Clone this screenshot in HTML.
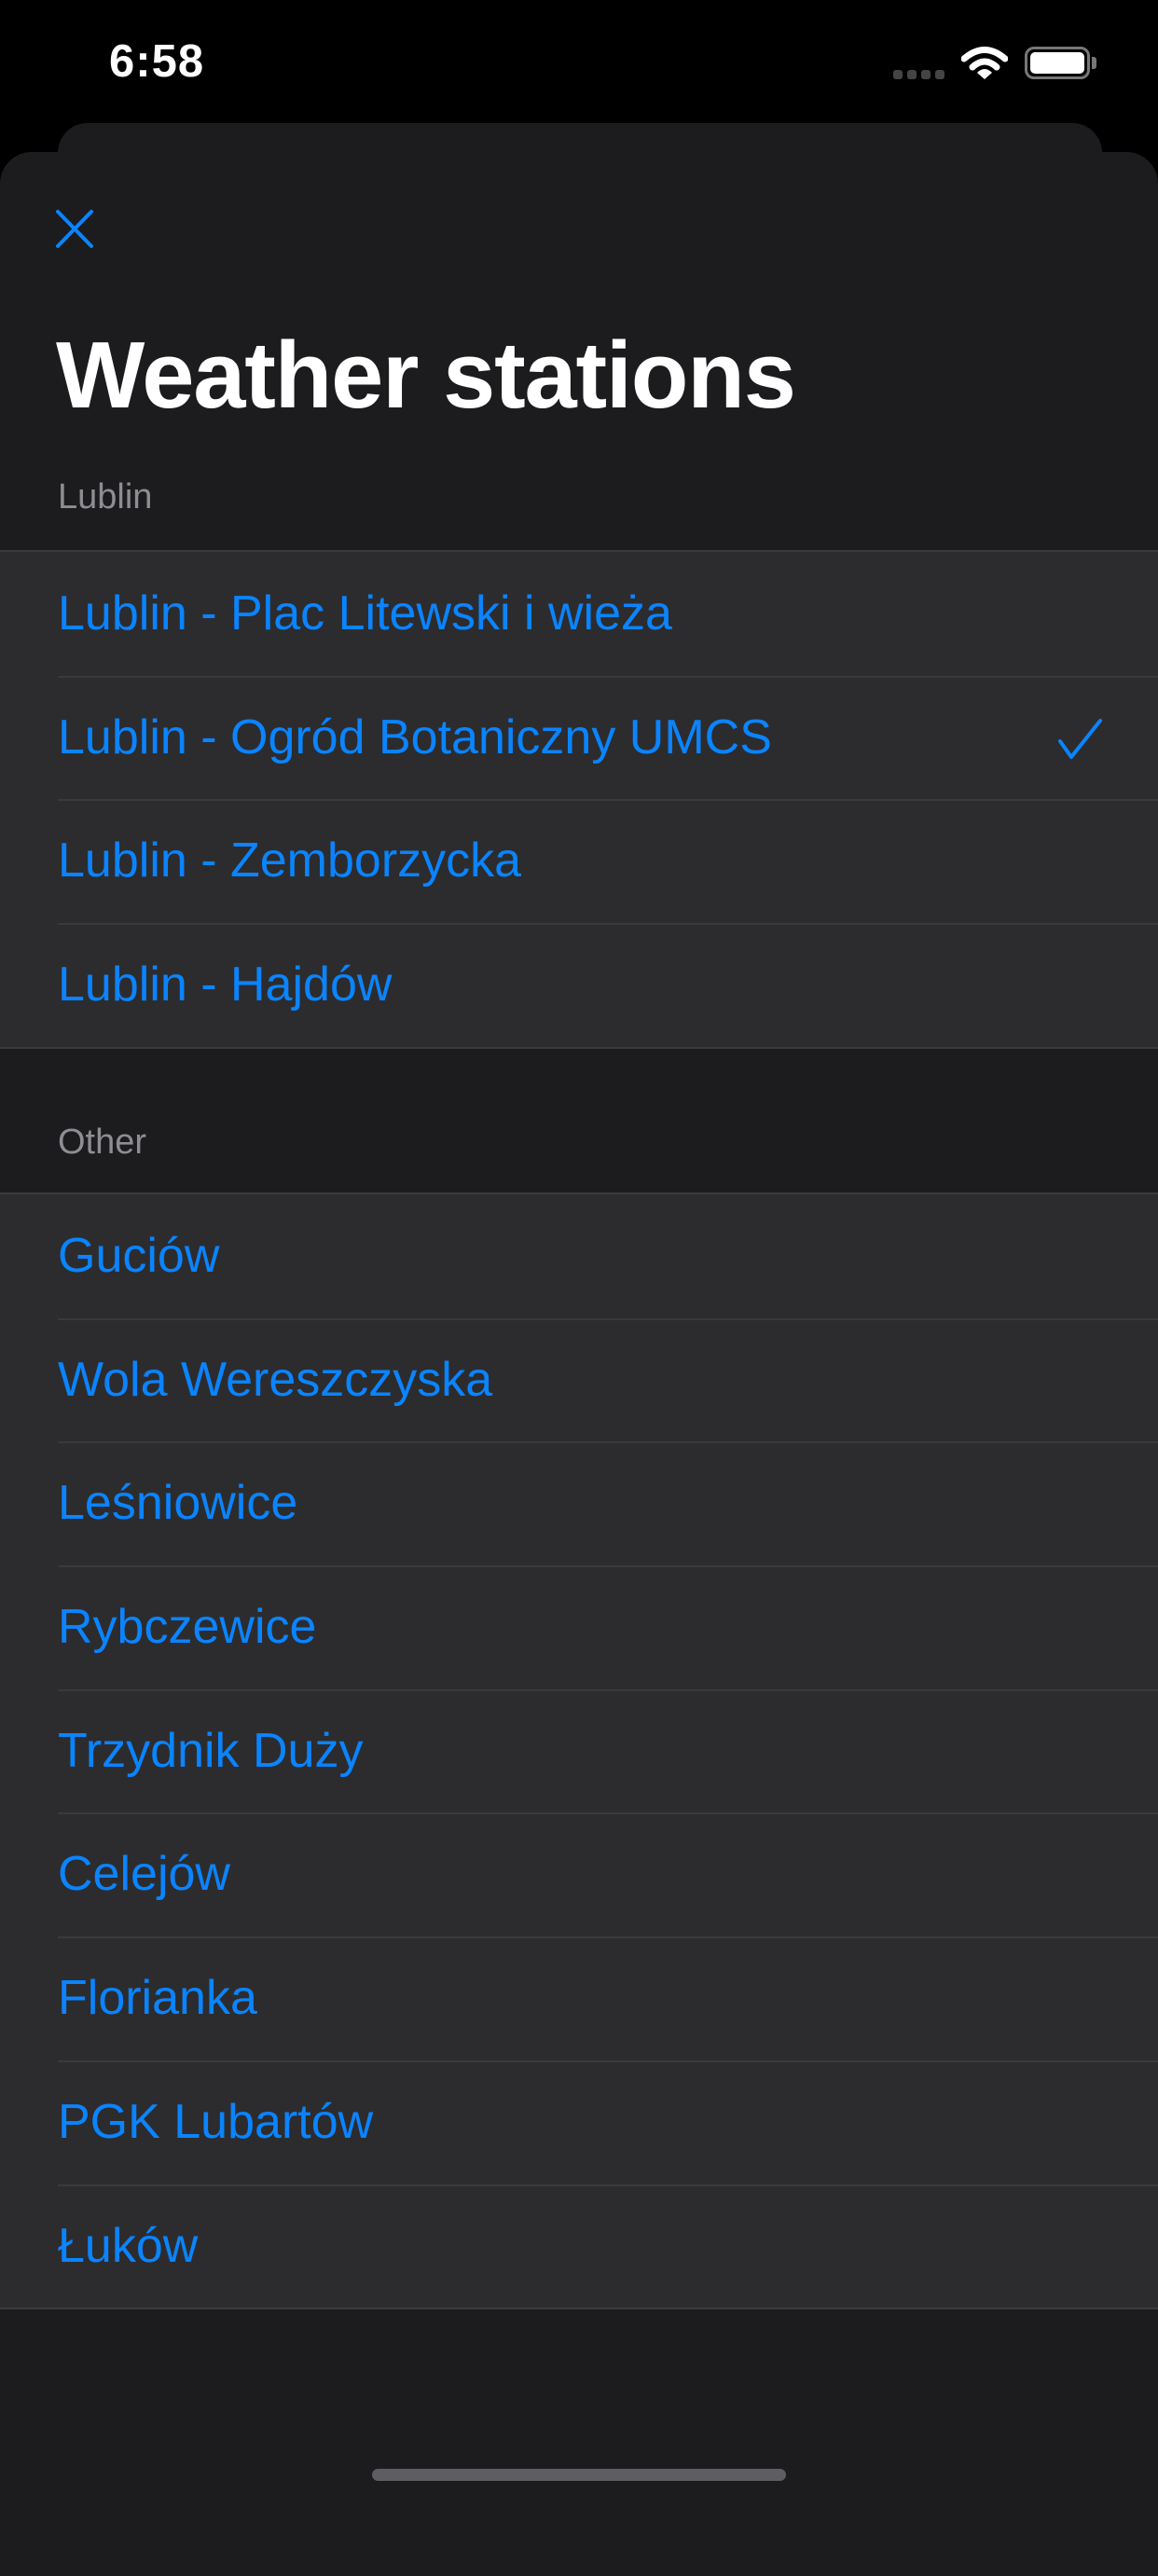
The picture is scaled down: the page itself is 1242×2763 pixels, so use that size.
<!DOCTYPE html>
<html><head><meta charset="utf-8"><style>
*{margin:0;padding:0;box-sizing:border-box}
body{width:1242px;height:2688px;background:#000;position:relative;overflow:hidden;font-family:"Liberation Sans",sans-serif}
.abs{position:absolute}
.back{left:62px;top:132px;width:1120px;height:200px;background:#1c1c1e;border-radius:32px}
.sheet{left:0;top:163px;width:1242px;height:2600px;background:#1c1c1e;border-radius:34px 34px 0 0}
.time{left:117px;top:38px;color:#fff;font-size:49px;font-weight:bold;letter-spacing:1px}
.title{left:60px;top:346px;color:#fff;font-size:101px;font-weight:bold;letter-spacing:-1.2px}
.hdr{left:62px;color:#8d8d93;font-size:38px}
.list{left:0;width:1242px;background:#2c2c2e;border-top:2px solid #3a3a3c;border-bottom:2px solid #3a3a3c}
.row{height:132.7px;position:relative;color:#0a84ff;font-size:52px;line-height:132px;padding-left:62px}
.row+.row:before{content:"";position:absolute;left:62px;right:0;top:0;height:2px;background:#3a3a3c}
.home{left:399px;top:2648px;width:444px;height:13px;border-radius:7px;background:#5e5e62}
</style></head><body>
<div class="abs time">6:58</div>
<div class="abs" style="left:958px;top:75px;width:56px;height:10px">
<span class="abs" style="left:0;top:0;width:10px;height:10px;border-radius:3px;background:#444"></span>
<span class="abs" style="left:15px;top:0;width:10px;height:10px;border-radius:3px;background:#444"></span>
<span class="abs" style="left:30px;top:0;width:10px;height:10px;border-radius:3px;background:#444"></span>
<span class="abs" style="left:45px;top:0;width:10px;height:10px;border-radius:3px;background:#444"></span>
</div>
<svg class="abs" style="left:1031px;top:48px" width="50" height="38" viewBox="0 0 50 38">
<path d="M3 15 Q25 -4 47 15" stroke="#fff" stroke-width="7" fill="none" stroke-linecap="round"/>
<path d="M12 24 Q25 12 38 24" stroke="#fff" stroke-width="7" fill="none" stroke-linecap="round"/>
<path d="M17 30 Q25 22 33 30 L25 37 Z" fill="#fff"/>
</svg>
<div class="abs" style="left:1099px;top:50px;width:70px;height:35px;border:3px solid #777;border-radius:10px;padding:3px"><div style="width:100%;height:100%;background:#fff;border-radius:5px"></div></div>
<div class="abs" style="left:1171px;top:61px;width:5px;height:13px;background:#777;border-radius:0 3px 3px 0"></div>

<div class="abs back"></div>
<div class="abs sheet"></div>
<svg class="abs" style="left:59px;top:224px" width="42" height="43" viewBox="0 0 42 43">
<path d="M3 3 L39 40 M39 3 L3 40" stroke="#0a84ff" stroke-width="4" stroke-linecap="round"/>
</svg>
<div class="abs title">Weather stations</div>
<div class="abs hdr" style="top:512px">Lublin</div>
<div class="abs list" style="top:590px">
<div class="row">Lublin - Plac Litewski i wieża</div>
<div class="row">Lublin - Ogród Botaniczny UMCS<svg class="abs" style="left:1134px;top:45px" width="50" height="46" viewBox="0 0 50 46"><path d="M3 25 L15 42 L46 3" stroke="#0a84ff" stroke-width="4" fill="none" stroke-linecap="round" stroke-linejoin="round"/></svg></div>
<div class="row">Lublin - Zemborzycka</div>
<div class="row">Lublin - Hajdów</div>
</div>
<div class="abs hdr" style="top:1204px">Other</div>
<div class="abs list" style="top:1279px">
<div class="row">Guciów</div>
<div class="row">Wola Wereszczyska</div>
<div class="row">Leśniowice</div>
<div class="row">Rybczewice</div>
<div class="row">Trzydnik Duży</div>
<div class="row">Celejów</div>
<div class="row">Florianka</div>
<div class="row">PGK Lubartów</div>
<div class="row">Łuków</div>
</div>
<div class="abs home"></div>
</body></html>
